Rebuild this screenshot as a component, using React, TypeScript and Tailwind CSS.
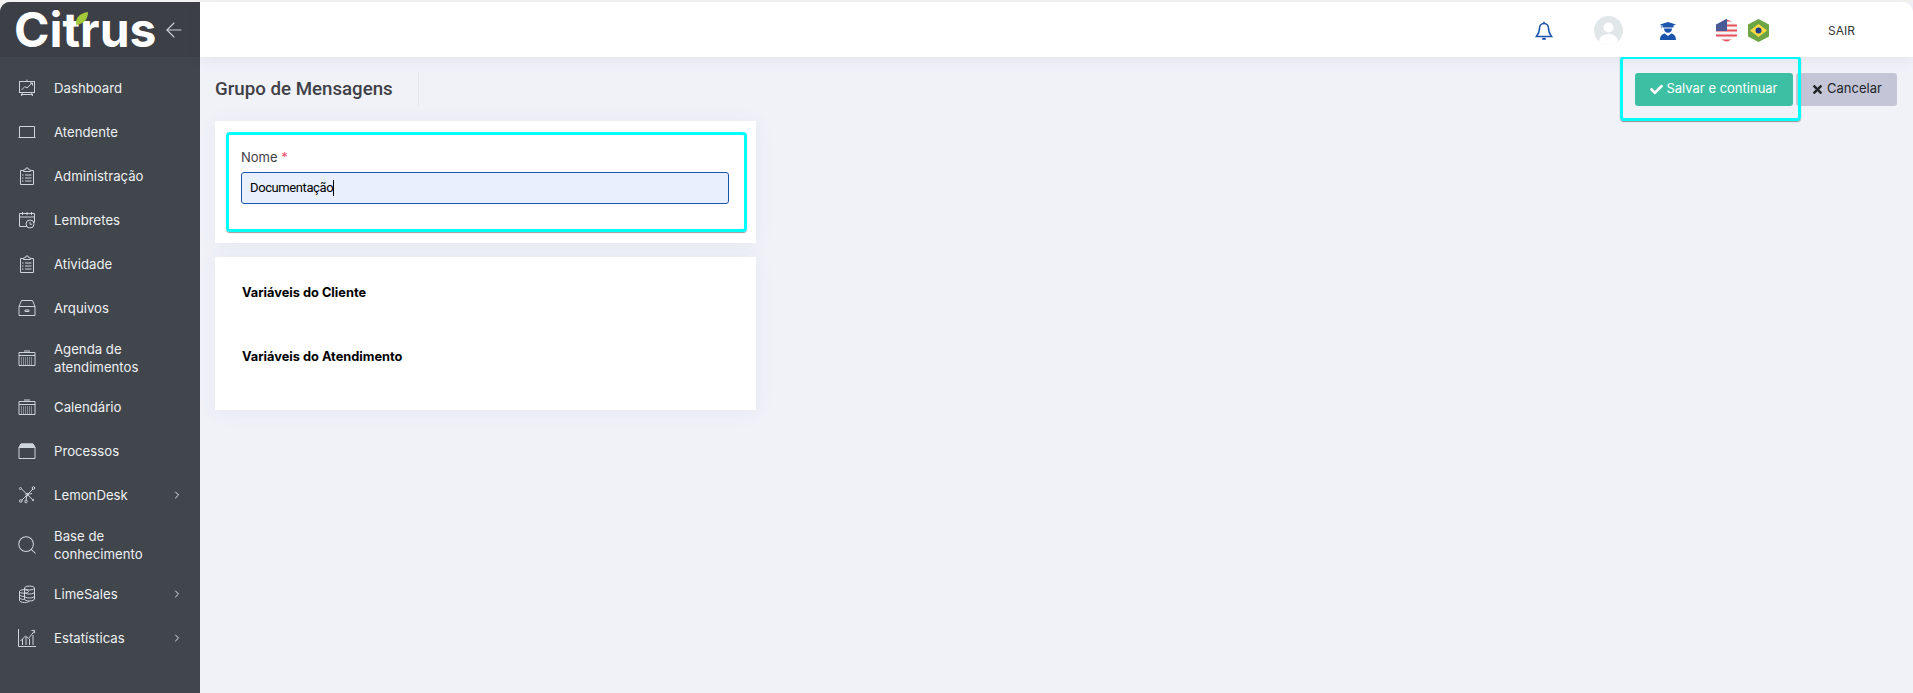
import type { ReactNode } from "react";
import { ArrowLeft, ChevronRight, Search } from "lucide-react";
import { FaCheck, FaTimes } from "react-icons/fa";

function Ico({ children }: { children: ReactNode }) {
  return (
    <svg
      viewBox="0 0 18 18"
      fill="none"
      stroke="currentColor"
      strokeWidth="1"
      className="h-[18px] w-[18px] shrink-0 text-[#cdd5da]"
      aria-hidden
    >
      {children}
    </svg>
  );
}

const DashboardIcon = () => (
  <Ico>
    <path d="M9 .5v1.5M1 2.500h16M1.500 2.500v11h15v-11M1 13.500h16M4.500 13.500l-1 3.500M13.500 13.500l1 3.500M3 15.500h12" />
    <path d="M3.500 11l3.500-3.500 2 1.500 5-5M12 4h2.500v2.500" />
  </Ico>
);
const LaptopIcon = () => (
  <Ico>
    <path d="M1.500 3.500v11M16.500 3.500v11M1.500 3.500h15M.5 14.500h17" />
  </Ico>
);
const ClipboardIcon = () => (
  <Ico>
    <path d="M5.500 3.500h-3v14h13v-14h-3M5.500 4.500v-1.500l2-.5.5-1.500h2l.5 1.500 2 .5v1.500zM7 8h6.500M7 11h6.500M7 14h6.500M4 8h1.500M4 11h1.500M4 14h1.500" />
  </Ico>
);
const ReminderIcon = () => (
  <Ico>
    <path d="M9 15.500h-7.500v-13h15v9M1.500 6h15M4.500 1v3M9 1v3M13.500 1v3" />
    <circle cx="12" cy="13" r="4" />
    <path d="M12 11v2.300h1.800" />
  </Ico>
);
const ArchiveIcon = () => (
  <Ico>
    <path d="M1 7.500h16v9h-16zM1 7.500l2.500-6h11l2.500 6M7 11h4v1.500h-4z" />
  </Ico>
);
const CalendarIcon = () => (
  <Ico>
    <path d="M1 3.500h16v13h-16zM1 6.500h16M6 2h6M6 3.500h6" />
    <path strokeDasharray="1 1" d="M3 9h12M3 11h12M3 13h12M3 15h12" />
  </Ico>
);
const WindowIcon = () => (
  <Ico>
    <path d="M1 5.500h16v11h-16zM3 2h12l2 3.500h-16z" />
    <path fill="currentColor" d="M3 2h12l2 3.500h-16z" />
  </Ico>
);
const NetworkIcon = () => (
  <Ico>
    <path d="M3.500 3l11 10.500M15 3l-11 11M9 8.500l-1 6M9 8.500l5-1" />
    <circle cx="2.500" cy="2.500" r="1" />
    <circle cx="15.500" cy="2" r="1.300" />
    <circle cx="2.800" cy="15" r="1.300" />
    <circle cx="8" cy="15.500" r="1.300" />
    <circle cx="15" cy="14" r=".8" />
    <circle cx="9" cy="8.500" r="1.200" />
  </Ico>
);
const CoinsIcon = () => (
  <Ico>
    <ellipse cx="11.500" cy="3" rx="5" ry="2" />
    <path d="M6.500 3v11c0 1 2 2 5 2s5-1 5-2v-11M6.500 7c0 1 2 2 5 2s5-1 5-2M6.500 11c0 1 2 2 5 2s5-1 5-2" />
    <ellipse cx="6" cy="6.500" rx="4.500" ry="1.800" />
    <path d="M1.500 6.500v9c0 1 2 2 5 2s4-.5 5-1.500M1.500 9.500c0 1 2 2 5 2M1.500 12.500c0 1 2 2 5 2" />
  </Ico>
);
const ChartIcon = () => (
  <Ico>
    <path d="M.5 0v17.500h17.500M2.500 12l5-5 3 2.500 6-7.500M13.500 1.500l3-.2.2 3M4.500 16v-6M8 16v-8M11.500 16v-6M15 16v-10" />
  </Ico>
);

const SearchIcon = () => <Search size={22} strokeWidth={1.1} className="-ml-[2px] shrink-0 text-[#cdd5da]" aria-hidden />;

const menu: { label: string; icon: ReactNode; arrow?: boolean }[] = [
  { label: "Dashboard", icon: <DashboardIcon /> },
  { label: "Atendente", icon: <LaptopIcon /> },
  { label: "Administração", icon: <ClipboardIcon /> },
  { label: "Lembretes", icon: <ReminderIcon /> },
  { label: "Atividade", icon: <ClipboardIcon /> },
  { label: "Arquivos", icon: <ArchiveIcon /> },
  { label: "Agenda de atendimentos", icon: <CalendarIcon /> },
  { label: "Calendário", icon: <CalendarIcon /> },
  { label: "Processos", icon: <WindowIcon /> },
  { label: "LemonDesk", icon: <NetworkIcon />, arrow: true },
  { label: "Base de conhecimento", icon: <SearchIcon /> },
  { label: "LimeSales", icon: <CoinsIcon />, arrow: true },
  { label: "Estatísticas", icon: <ChartIcon />, arrow: true },
];

function Sidebar() {
  return (
    <aside className="flex w-[200px] shrink-0 flex-col rounded-tl-[10px] bg-[#41454c] font-['Inter',sans-serif]">
      <div className="flex h-[55px] items-center rounded-tl-[10px] bg-[#3c3f45] pl-[14px]">
        <div className="relative font-['Inter',sans-serif] text-[48px] leading-[55px] font-bold tracking-[0px] text-white">
          Citrus
          <svg viewBox="0 0 12 12" className="absolute top-[10px] left-[61px] h-[13px] w-[13px]" aria-hidden>
            <path d="M1 12C0 5 5 1 12 0c0 7-4 11-11 12z" fill="#a3c93a" />
          </svg>
        </div>
        <ArrowLeft size={24} strokeWidth={1.15} className="ml-[6px] text-[#c9ced2]" aria-hidden />
      </div>
      <nav className="flex flex-col pt-[9px]">
        {menu.map((item) => (
          <div key={item.label} className="flex min-h-[44px] items-center py-[9.5px] pr-[17px] pl-[18px] text-[13.2px] leading-[18px] text-[#eef1f3]">
            <span className="flex w-[36px] shrink-0 items-center">{item.icon}</span>
            <span className={item.label.length > 15 ? "w-[100px]" : "flex-1"}>{item.label}</span>
            {item.arrow && <ChevronRight size={12} strokeWidth={2} className="ml-auto text-[#e6e9ec]" aria-hidden />}
          </div>
        ))}
      </nav>
    </aside>
  );
}

function BellIcon() {
  return (
    <svg viewBox="0 0 18 20" fill="none" stroke="#1c55ac" strokeWidth="1.6" className="h-[20px] w-[18px]" aria-hidden>
      <path d="M9 2.500c-3 0-4.500 2.200-4.500 5 0 4-1 5.500-3 8h15c-2-2.500-3-4-3-8 0-2.800-1.500-5-4.500-5zM9 .8v1.700" />
      <path d="M7.200 17.800h3.600" strokeWidth="2" />
    </svg>
  );
}

function AvatarIcon() {
  return (
    <svg viewBox="0 0 29 29" className="h-[29px] w-[29px]" aria-hidden>
      <circle cx="14.500" cy="14.500" r="14.500" fill="#e1e6e9" />
      <circle cx="14.500" cy="11.500" r="5" fill="#fff" />
      <path d="M5 25c1-5 5-7 9.500-7s8.500 2 9.500 7c-2.500 2.500-6 4-9.500 4s-7-1.500-9.500-4z" fill="#fff" />
    </svg>
  );
}

function GraduateIcon() {
  return (
    <svg viewBox="0 0 16 18" className="h-[18px] w-[16px]" fill="#1c55ac" aria-hidden>
      <path d="M8 0l8 2.500-2.500 1v2h-11v-2l-1-.4v3.400h-.6v-3.600l-.9-.4z" />
      <path d="M4 6.500h8c0 2.500-1.500 4.200-4 4.200s-4-1.700-4-4.200z" />
      <path d="M0 18c0-4 2-6 4.800-6.500l3.200 2.500 3.200-2.500c2.800.5 4.800 2.500 4.800 6.500z" />
    </svg>
  );
}

function UsFlag() {
  return (
    <svg viewBox="0 0 21 23" className="h-[23px] w-[21px]" aria-hidden>
      <clipPath id="hex-us">
        <polygon points="10.500,0 21,5.500 21,17.500 10.500,23 0,17.500 0,5.500" />
      </clipPath>
      <g clipPath="url(#hex-us)">
        <rect width="21" height="23" fill="#f5f5f5" />
        <path d="M0 1.500h21M0 6.500h21M0 11.500h21M0 16.500h21M0 21.500h21" stroke="#e8505b" strokeWidth="2.200" />
        <rect width="11" height="12" fill="#4a5a94" />
      </g>
    </svg>
  );
}

function BrFlag() {
  return (
    <svg viewBox="0 0 21 23" className="h-[23px] w-[21px]" aria-hidden>
      <polygon points="10.500,0 21,5.500 21,17.500 10.500,23 0,17.500 0,5.500" fill="#6da544" />
      <polygon points="10.500,5 19,11.500 10.500,18 2,11.500" fill="#ffda44" />
      <circle cx="10.500" cy="11.500" r="3" fill="#1f3f8a" />
    </svg>
  );
}

function Topbar() {
  return (
    <header className="relative z-10 flex h-[55px] shrink-0 items-center rounded-tr-[10px] bg-white pt-[2px] shadow-[0_4px_14px_rgba(90,90,140,0.08)]">
      <div className="ml-auto flex items-center">
        <BellIcon />
        <div className="ml-[41px]">
          <AvatarIcon />
        </div>
        <div className="ml-[37px]">
          <GraduateIcon />
        </div>
        <div className="ml-[40px]">
          <UsFlag />
        </div>
        <div className="ml-[11px]">
          <BrFlag />
        </div>
        <span className="mr-[58px] ml-[59px] font-['Inter',sans-serif] text-[12px] text-[#333]">SAIR</span>
      </div>
    </header>
  );
}

export default function App() {
  return (
    <div className="flex h-[693px] overflow-hidden bg-[#f2f2f2] pt-[2px]">
      <Sidebar />
      <div className="flex min-w-0 flex-1 flex-col bg-[#f0f2f8]">
        <Topbar />
        <main className="flex flex-1 flex-col pr-[16px] pl-[15px]">
          <div className="flex h-[64px] items-center">
            <h1 className="font-['Roboto',sans-serif] text-[18.7px] font-medium text-[#3f4047]">Grupo de Mensagens</h1>
            <div className="ml-[25px] h-[34px] w-px bg-[#e4e6ee]" />
            <div className="ml-auto flex h-[33px] gap-[3px] font-['Inter',sans-serif] text-[13px]">
              <div className="relative">
                <button type="button" className="flex h-[33px] w-[158px] items-center justify-center gap-[3px] rounded-[3px] bg-[#3dbfa3] text-white">
                  <FaCheck size={13} aria-hidden />
                  Salvar e continuar
                </button>
                <div className="pointer-events-none absolute top-[-17px] right-[-8px] bottom-[-15px] left-[-15px] rounded-[4px] border-[3px] border-[#0ff] shadow-[0_1px_1px_rgba(0,0,0,0.4)]" />
              </div>
              <button type="button" className="flex h-[33px] w-[101px] items-center justify-center gap-[3px] rounded-[3px] bg-[#c4c5d6] text-[#212529]">
                <FaTimes size={13} aria-hidden />
                Cancelar
              </button>
            </div>
          </div>

          <section className="h-[122px] w-[541px] bg-white py-[11px] pr-[9px] pl-[11px] shadow-[0_2px_20px_rgba(90,90,140,0.06)]">
            <div className="h-[100px] rounded-[4px] border-[3px] border-[#0ff] px-[12px] pt-[12px] shadow-[0_1px_1px_rgba(0,0,0,0.4)]">
              <label className="block font-['Inter',sans-serif] text-[13px] leading-[20px] text-[#3f4047]">
                Nome <span className="text-[#f4516c]">*</span>
              </label>
              <div className="mt-[5px] flex h-[32px] w-[488px] items-center rounded-[3px] border border-[#1c55ac] bg-[#e8f0fe] pl-[8px] font-['Roboto',sans-serif] text-[13px] tracking-[-0.4px] text-black">
                Documentação
                <span className="h-[16px] w-px bg-black" />
              </div>
            </div>
          </section>

          <section className="mt-[14px] h-[153px] w-[541px] bg-white pt-[26px] pl-[27px] font-['Inter',sans-serif] text-[12.8px] leading-[20px] font-bold text-black shadow-[0_2px_20px_rgba(90,90,140,0.06)]">
            <div>Variáveis do Cliente</div>
            <div className="mt-[44px]">Variáveis do Atendimento</div>
          </section>
        </main>
      </div>
    </div>
  );
}
